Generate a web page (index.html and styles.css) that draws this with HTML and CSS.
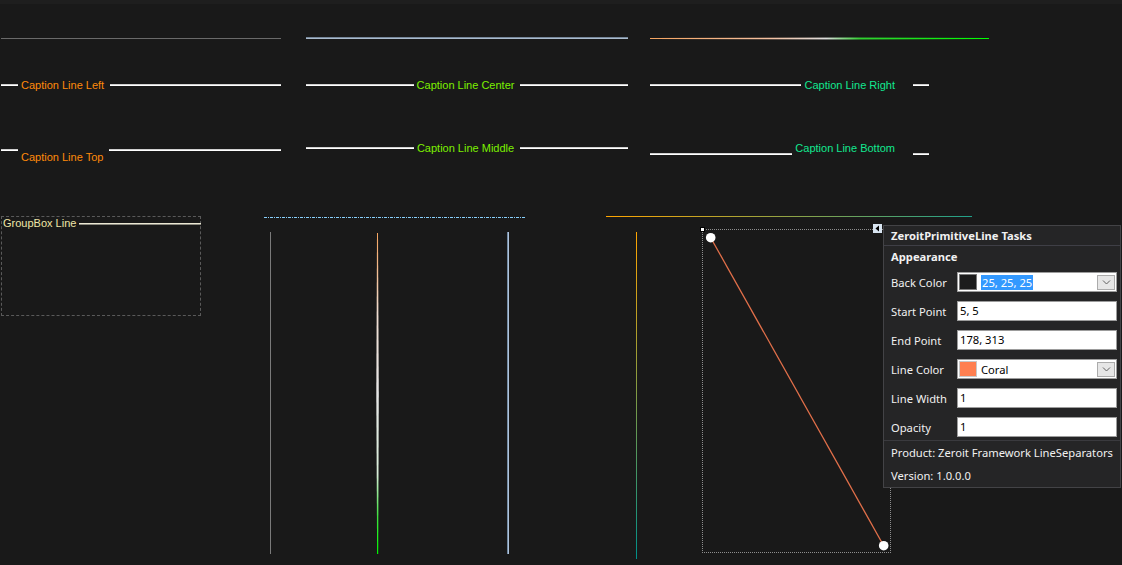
FILE: index.html
```html
<!DOCTYPE html>
<html lang="en">
<head>
<meta charset="utf-8">
<title>Zeroit LineSeparators</title>
<link rel="stylesheet" href="styles.css">
</head>
<body>
<div class="tabstrip"></div>
<main class="canvas">
  <section class="captions">
    <div class="row row-a">
      <div class="cell c1"><div class="hl-gray"></div></div>
      <div class="cell c2"><div class="hl-slate"></div></div>
      <div class="cell c3 wide">
        <svg class="hl-lens" width="339" height="3" viewBox="0 0 339 3">
          <defs>
            <linearGradient id="gh" x1="0" y1="0" x2="1" y2="0">
              <stop offset="0" stop-color="#f4a460"/>
              <stop offset="0.35" stop-color="#f5c0a0"/>
              <stop offset="0.52" stop-color="#dcdcdc"/>
              <stop offset="0.62" stop-color="#30d030"/>
              <stop offset="1" stop-color="#00ff00"/>
            </linearGradient>
          </defs>
          <polygon points="0,1 200,0.5 339,1 339,2 200,2.5 0,2" fill="url(#gh)"/>
        </svg>
      </div>
    </div>
    <div class="row row-b">
      <div class="cell c1 cap"><span class="seg short"></span><span class="ctext orange">Caption Line Left</span><span class="seg fill"></span></div>
      <div class="cell c2 cap"><span class="seg fill"></span><span class="ctext lime">Caption Line Center</span><span class="seg fill"></span></div>
      <div class="cell c3 cap cap-end"><span class="seg fill"></span><span class="ctext spring">Caption Line Right</span><span class="seg tail"></span></div>
    </div>
    <div class="row row-c">
      <div class="cell c1 cap cap-top"><span class="seg short"></span><span class="ctext orange">Caption Line Top</span><span class="seg fill"></span></div>
      <div class="cell c2 cap cap-mid"><span class="seg fill"></span><span class="ctext lime">Caption Line Middle</span><span class="seg fill"></span></div>
      <div class="cell c3 cap cap-end cap-bot"><span class="seg fill"></span><span class="ctext spring">Caption Line Bottom</span><span class="seg tail"></span></div>
    </div>
  </section>

  <section class="lower">
    <div class="groupbox">
      <div class="gb-head"><span class="gb-title">GroupBox Line</span><span class="gb-rule"></span></div>
    </div>

    <div class="vset">
      <div class="dashdot"></div>
      <div class="vlines">
        <div class="vl-gray"></div>
        <svg class="vl-lens" width="3" height="321" viewBox="0 0 3 321">
          <defs>
            <linearGradient id="gv" x1="0" y1="0" x2="0" y2="1">
              <stop offset="0" stop-color="#f4a460"/>
              <stop offset="0.1" stop-color="#f4b888"/>
              <stop offset="0.25" stop-color="#eedcd0"/>
              <stop offset="0.5" stop-color="#e6e6e6"/>
              <stop offset="0.75" stop-color="#d8ecd8"/>
              <stop offset="0.88" stop-color="#40e040"/>
              <stop offset="1" stop-color="#00ff00"/>
            </linearGradient>
          </defs>
          <polygon points="1,0 2,0 2.8,160 2.2,321 1.1,321 0.3,160" fill="url(#gv)"/>
        </svg>
        <div class="vl-steel"></div>
      </div>
    </div>

    <div class="oset">
      <div class="hgrad"></div>
      <div class="oset-body">
        <div class="vl-grad"></div>
        <div class="selbox">
          <span class="handle"></span>
          <svg class="primline" width="187" height="322" viewBox="0 0 187 322">
            <line x1="7.7" y1="7.7" x2="180.7" y2="315.7" stroke="#e2704a" stroke-width="1.3"/>
            <circle cx="7.7" cy="7.7" r="4.8" fill="#ffffff"/>
            <circle cx="180.7" cy="315.7" r="4.8" fill="#ffffff"/>
          </svg>
          <span class="smarttag">
            <svg width="9" height="9" viewBox="0 0 9 9"><polygon points="6,1.5 6,7.5 2.5,4.5" fill="#000"/></svg>
          </span>

          <div class="tasks">
            <div class="t-title">ZeroitPrimitiveLine Tasks</div>
            <div class="t-head">Appearance</div>
            <div class="t-props">
              <div class="t-row">
                <span class="t-label">Back Color</span>
                <div class="t-field t-combo">
                  <span class="swatch sw-back"></span>
                  <span class="t-sel">25, 25, 25</span>
                  <span class="t-drop"><svg width="9" height="5" viewBox="0 0 9 5"><polyline points="1,0.5 4.5,4 8,0.5" fill="none" stroke="#606060" stroke-width="1"/></svg></span>
                </div>
              </div>
              <div class="t-row">
                <span class="t-label">Start Point</span>
                <div class="t-field">5, 5</div>
              </div>
              <div class="t-row">
                <span class="t-label">End Point</span>
                <div class="t-field">178, 313</div>
              </div>
              <div class="t-row">
                <span class="t-label">Line Color</span>
                <div class="t-field t-combo">
                  <span class="swatch sw-coral"></span>
                  <span class="t-val">Coral</span>
                  <span class="t-drop"><svg width="9" height="5" viewBox="0 0 9 5"><polyline points="1,0.5 4.5,4 8,0.5" fill="none" stroke="#606060" stroke-width="1"/></svg></span>
                </div>
              </div>
              <div class="t-row">
                <span class="t-label">Line Width</span>
                <div class="t-field">1</div>
              </div>
              <div class="t-row">
                <span class="t-label">Opacity</span>
                <div class="t-field">1</div>
              </div>
            </div>
            <div class="t-foot">
              <div class="t-product">Product: Zeroit Framework LineSeparators</div>
              <div class="t-version">Version: 1.0.0.0</div>
            </div>
          </div>
        </div>
      </div>
    </div>
  </section>
</main>
</body>
</html>
```

FILE: styles.css
```css
* { box-sizing: border-box; }
html, body { margin: 0; padding: 0; }
body {
  background: #191919;
  width: 1122px;
  height: 565px;
  overflow: hidden;
  font-family: "Liberation Sans", Arial, sans-serif;
}
.tabstrip { height: 4px; background: #1e1e1e; }

/* ---------- caption rows ---------- */
.row {
  display: grid;
  grid-template-columns: 305px 344px 340px;
  padding-left: 1px;
}
.row-a { margin-top: 26px; height: 16px; }
.row-b { margin-top: 31px; height: 16px; }
.row-c { margin-top: 47px; height: 26px; }
.c1 { width: 280px; }
.c2 { width: 322px; }
.c3 { width: 279px; }
.c3.wide { width: 339px; }

.hl-gray { margin-top: 8px; height: 1px; background: #6a6a6a; }
.hl-slate { margin-top: 7px; height: 2px; background: linear-gradient(#76879a 50%, #aabbcd 50%); }
.hl-lens { display: block; margin-top: 7px; }

.cap { display: flex; }
.row-b .cap { align-items: center; height: 16px; }
.row-c .cap { align-items: flex-start; height: 26px; }

.seg { height: 2px; background: linear-gradient(#cfcfcf 50%, #ffffff 50%); }
.seg.short { width: 17px; flex: none; }
.seg.tail { width: 16px; flex: none; }
.seg.fill { flex: 1; }

.ctext {
  font-size: 11px;
  line-height: 16px;
  white-space: nowrap;
  padding: 0 6px 0 3px;
}
.cap-end .ctext { padding-right: 18px; }
.row-c .ctext { line-height: 14px; }
.cap-top .seg { margin-top: 9px; }
.cap-top .ctext { margin-top: 10px; }
.cap-mid .seg { margin-top: 7px; }
.cap-mid .ctext { margin-top: 1px; }
.cap-bot .seg { margin-top: 13px; }
.cap-bot .ctext { margin-top: 1px; }

.orange { color: #ff8a0a; }
.lime { color: #7cf000; }
.spring { color: #12e890; }

/* ---------- lower controls ---------- */
.lower {
  display: flex;
  align-items: flex-start;
  margin-top: 50px;
  padding-left: 1px;
}
.groupbox {
  width: 200px;
  height: 100px;
  border: 1px dashed #5a5a5a;
}
.gb-head {
  display: flex;
  align-items: center;
  height: 13px;
  padding-left: 1px;
}
.gb-title {
  font-size: 11px;
  line-height: 13px;
  color: #efe6a8;
  white-space: nowrap;
}
.gb-rule {
  flex: 1;
  height: 2px;
  margin-left: 3px;
  margin-right: -1px;
  background: linear-gradient(#ece8d4 50%, #8c8a80 50%);
}

.vset { margin-left: 63px; width: 262px; }
.dashdot {
  margin-top: 1px;
  height: 1px;
  background: repeating-linear-gradient(90deg, #87cefa 0 3px, transparent 3px 4px, #87cefa 4px 5px, transparent 5px 6px);
}
.vlines { display: flex; align-items: flex-start; margin-top: 14px; }
.vl-gray { margin-left: 6px; width: 1px; height: 322px; background: #7a7a7a; }
.vl-lens { display: block; margin-left: 105px; margin-top: 1px; }
.vl-steel {
  margin-left: 128px;
  width: 2px;
  height: 322px;
  background: linear-gradient(90deg, #7088a0 50%, #b0c4de 50%);
}

.oset { margin-left: 80px; width: 366px; }
.hgrad { height: 1px; background: linear-gradient(90deg, #ffa500, #20a08a); }
.oset-body { display: flex; align-items: flex-start; margin-top: 12px; }
.vl-grad {
  margin-left: 30px;
  margin-top: 3px;
  width: 1px;
  height: 327px;
  background: linear-gradient(#ffa500, #00908a);
}
.selbox {
  position: relative;
  margin-left: 65px;
  width: 189px;
  height: 324px;
  border: 1px dotted #8e8e8e;
}
.primline { display: block; }
.handle {
  position: absolute;
  left: -3px;
  top: -3px;
  width: 5px;
  height: 5px;
  background: #fff;
  border: 1px solid #000;
}
.smarttag {
  position: absolute;
  left: 170px;
  top: -6px;
  width: 9px;
  height: 9px;
  background: #d9e5f1;
  display: flex;
}
.smarttag svg { display: block; }

/* ---------- smart tag panel ---------- */
.tasks {
  position: absolute;
  left: 180px;
  top: -5px;
  width: 238px;
  z-index: 2;
  background: #252526;
  border: 1px solid #434346;
  color: #f1f1f1;
  font-family: "Noto Sans", "Open Sans", sans-serif;
  font-size: 11.2px;
}
.t-title {
  height: 20px;
  line-height: 19px;
  padding-left: 7px;
  font-weight: 700;
  border-bottom: 1px solid #3f3f46;
  white-space: nowrap;
}
.t-head {
  height: 22px;
  line-height: 22px;
  padding-left: 7px;
  font-weight: 700;
}
.t-props {
  display: flex;
  flex-direction: column;
  gap: 9px;
  padding: 4px 3px 3px 7px;
}
.t-row { display: flex; align-items: center; height: 20px; }
.t-label { flex: 0 0 66px; white-space: nowrap; }
.t-field {
  flex: 1;
  height: 20px;
  line-height: 18px;
  padding-left: 2px;
  background: #ffffff;
  color: #000000;
  border: 1px solid #9c9c9c;
  white-space: nowrap;
}
.t-combo { display: flex; align-items: center; padding-left: 1px; }
.swatch {
  flex: none;
  width: 18px;
  height: 16px;
  border: 1px solid #7a7a7a;
}
.sw-back { background: #1c1c1c; }
.sw-coral { background: #ff7f50; border-color: #c8c8c8; }
.t-sel {
  margin-left: 4px;
  padding: 0 1px;
  line-height: 15px;
  background: #3399ff;
  color: #ffffff;
}
.t-val { margin-left: 4px; line-height: 15px; }
.t-drop {
  margin-left: auto;
  margin-right: 1px;
  width: 18px;
  height: 15px;
  background: #e6e6e6;
  border: 1px solid #ababab;
  display: flex;
  align-items: center;
  justify-content: center;
}
.t-drop svg { display: block; }
.t-foot { border-top: 1px solid #3a3a3e; padding-left: 7px; }
.t-product { height: 24px; line-height: 24px; white-space: nowrap; }
.t-version { height: 22px; line-height: 22px; }
```
